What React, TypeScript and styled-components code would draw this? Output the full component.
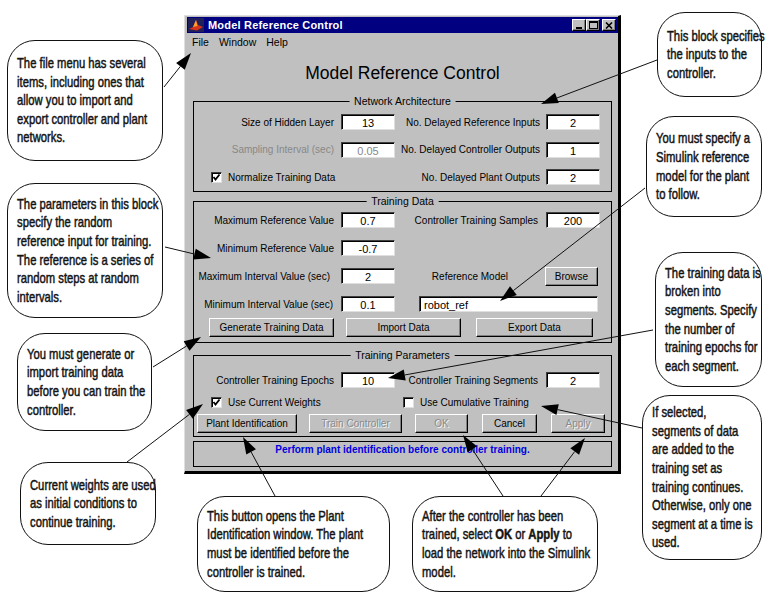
import React from "react";
import styled, { createGlobalStyle } from "styled-components";

const GlobalStyle = createGlobalStyle`
  html, body {
    margin: 0;
    padding: 0;
    background: #fff;
  }
  body {
    width: 784px;
    height: 597px;
    overflow: hidden;
  }
`;

const ui = `"Liberation Sans", Arial, sans-serif`;

const Page = styled.div`
  position: relative;
  width: 784px;
  height: 597px;
  display: grid;
  grid-template-columns: 184px 437px 163px;
  align-items: start;
  background: #fff;
`;

const SideColumn = styled.div`
  display: flex;
  flex-direction: column;
  align-items: flex-start;
`;

const Callout = styled.div<{ $w: number; $h: number; $top?: number; $left?: number }>`
  box-sizing: border-box;
  width: ${(p) => p.$w}px;
  height: ${(p) => p.$h}px;
  margin-top: ${(p) => p.$top ?? 0}px;
  margin-left: ${(p) => p.$left ?? 0}px;
  padding: 0 4px 0 9px;
  border: 1.3px solid #111;
  border-radius: 28px;
  background: #fff;
  display: flex;
  flex-direction: column;
  justify-content: center;
`;

// the callouts use a condensed face; squeeze Liberation Sans to get its widths
const NoteText = styled.div`
  transform: scaleX(0.75);
  transform-origin: 0 50%;
  font-family: "Liberation Sans", Arial, sans-serif;
  font-size: 15px;
  line-height: 18.6px;
  color: #141414;
  -webkit-text-stroke: 0.5px #141414;
  white-space: nowrap;

  b {
    font-weight: 700;
  }
`;

const CenterColumn = styled.div`
  display: flex;
  flex-direction: column;
`;

const BottomNotes = styled.div`
  display: flex;
  gap: 22px;
  margin-top: 22px;
  padding-left: 13px;
`;

/* ---- dialog ---- */

const Window = styled.div`
  margin-top: 15px;
  width: 437px;
  box-sizing: border-box;
  background: #c0c0c0;
  border-style: solid;
  border-width: 1px 3px 3px 1px;
  border-color: #dfdfdf #000 #000 #dfdfdf;
  padding: 1px 0 4px 2px;
  font-family: ${ui};
  color: #000;
`;

const TitleBar = styled.div`
  height: 16px;
  background: #000080;
  display: flex;
  align-items: center;
  padding: 0 2px 0 1px;
  gap: 4px;
`;

const TitleText = styled.span`
  color: #fff;
  font-weight: 700;
  font-size: 11px;
  letter-spacing: 0.2px;
`;

const TitleButtons = styled.div`
  margin-left: auto;
  display: flex;
`;

const WinButton = styled.div<{ $gap?: number }>`
  box-sizing: border-box;
  width: 14px;
  height: 12px;
  margin-left: ${(p) => p.$gap ?? 0}px;
  background: #c0c0c0;
  border: 1px solid;
  border-color: #fff #000 #000 #fff;
  box-shadow: inset -1px -1px #808080;
  display: flex;
  align-items: center;
  justify-content: center;
`;

const MenuBar = styled.div`
  height: 18px;
  display: flex;
  align-items: center;
  font-size: 10.5px;
`;

const MenuItem = styled.span`
  padding: 0 5px;
`;

const Heading = styled.div`
  height: 32px;
  box-sizing: border-box;
  padding-top: 12px;
  text-align: center;
  font-size: 17.5px;
  line-height: 20px;
`;

const Body = styled.div`
  display: flex;
  flex-direction: column;
  padding: 0 6px;
`;

const Group = styled.div<{ $top: number; $pt: number; $pb: number }>`
  position: relative;
  margin-top: ${(p) => p.$top}px;
  padding: ${(p) => p.$pt}px 0 ${(p) => p.$pb}px;
  border: 1px solid #000;
`;

const GroupTitle = styled.span`
  position: absolute;
  top: -7px;
  left: 50%;
  transform: translateX(-50%);
  padding: 0 5px;
  background: #c0c0c0;
  font-size: 10.5px;
  line-height: 12px;
  white-space: nowrap;
`;

const FieldGrid = styled.div<{ $gap: number }>`
  display: grid;
  grid-template-columns: 147px 54px 151px 54px;
  grid-auto-rows: 16px;
  row-gap: ${(p) => p.$gap}px;
  align-items: center;
`;

const Label = styled.span<{ $pr?: number; $off?: boolean }>`
  text-align: right;
  padding-right: ${(p) => p.$pr ?? 7}px;
  font-size: 10px;
  white-space: nowrap;
  color: ${(p) => (p.$off ? "#888" : "#000")};
`;

const Field = styled.div<{ $off?: boolean; $left?: boolean; $span?: boolean }>`
  box-sizing: border-box;
  height: 16px;
  background: #fff;
  border: 1px solid;
  border-color: #404040 #dfdfdf #dfdfdf #404040;
  box-shadow: inset 1px 1px #000;
  font-size: 11px;
  line-height: 15px;
  padding: 1px 4px 0;
  text-align: ${(p) => (p.$left ? "left" : "center")};
  color: ${(p) => (p.$off ? "#888" : "#000")};
  ${(p) => (p.$span ? "grid-column: 3 / 5; margin: 0 2px 0 24px;" : "")}
`;

const CheckCell = styled.label<{ $pl: number; $cols: string }>`
  grid-column: ${(p) => p.$cols};
  display: flex;
  align-items: center;
  gap: 6px;
  padding-left: ${(p) => p.$pl}px;
  font-size: 10px;
  white-space: nowrap;
`;

const Box = styled.span`
  box-sizing: border-box;
  width: 11px;
  height: 11px;
  background: #fff;
  border: 1px solid;
  border-color: #404040 #dfdfdf #dfdfdf #404040;
  box-shadow: inset 1px 1px #000;
  display: flex;
  align-items: center;
  justify-content: center;
`;

const ButtonRow = styled.div<{ $top: number; $pl: number }>`
  display: flex;
  margin-top: ${(p) => p.$top}px;
  padding-left: ${(p) => p.$pl}px;
`;

const Button = styled.div<{ $w: number; $ml?: number; $off?: boolean }>`
  box-sizing: border-box;
  width: ${(p) => p.$w}px;
  height: 19px;
  margin-left: ${(p) => p.$ml ?? 0}px;
  background: #c0c0c0;
  border: 1px solid;
  border-color: #fff #000 #000 #fff;
  box-shadow: inset -1px -1px #808080;
  display: flex;
  align-items: center;
  justify-content: center;
  font-size: 10px;
  white-space: nowrap;
  color: ${(p) => (p.$off ? "#8a8a8a" : "#000")};
  text-shadow: ${(p) => (p.$off ? "1px 1px #f4f4f4" : "none")};
`;

const CheckRow = styled(FieldGrid)`
  margin-top: 8px;
  grid-auto-rows: 12px;
`;

const StatusBar = styled.div`
  box-sizing: border-box;
  margin-top: 4px;
  height: 26px;
  border: 1px solid #000;
  padding-top: 2px;
  text-align: center;
  font-size: 10px;
  font-weight: 700;
  color: #0000e0;
`;

const Arrows = styled.svg`
  position: absolute;
  left: 0;
  top: 0;
  pointer-events: none;
`;

/* ---- drawings ---- */

const AppIcon = () => (
  <svg width="16" height="14" viewBox="0 0 16 14">
    <rect width="16" height="14" fill="#20205a" />
    <path d="M1 11 L5 9 L8 2 L10 7 L15 9 L9 12.5 Z" fill="#d8341a" />
    <path d="M5 9 L8 2 L9.5 8 Z" fill="#ffa030" />
  </svg>
);

const Tick = () => (
  <svg width="9" height="9" viewBox="0 0 9 9">
    <path d="M1.5 4 L3.5 6.5 L7.5 1.5" stroke="#000" strokeWidth="1.8" fill="none" />
  </svg>
);

const Check = ({ on }: { on?: boolean }) => <Box>{on ? <Tick /> : null}</Box>;

type ArrowSpec = [number, number, number, number];

const arrowList: ArrowSpec[] = [
  [164, 87, 191, 53],
  [165, 247, 211, 258],
  [153, 367, 201, 337],
  [127, 462, 203, 404],
  [657, 60, 541, 104],
  [645, 188, 500, 301],
  [653, 330, 388, 378],
  [642, 428, 541, 406],
  [275, 496, 243, 437],
  [503, 496, 463, 435],
  [541, 496, 585, 438],
];

const Arrow = ({ a }: { a: ArrowSpec }) => {
  const [x1, y1, x2, y2] = a;
  const dx = x2 - x1;
  const dy = y2 - y1;
  const len = Math.hypot(dx, dy);
  const ux = dx / len;
  const uy = dy / len;
  const bx = x2 - ux * 17;
  const by = y2 - uy * 17;
  const nx = -uy * 5.5;
  const ny = ux * 5.5;
  return (
    <g>
      <line x1={x1} y1={y1} x2={bx} y2={by} stroke="#111" strokeWidth="1" />
      <polygon points={`${x2},${y2} ${bx + nx},${by + ny} ${bx - nx},${by - ny}`} fill="#000" />
    </g>
  );
};

const Note = ({ rows }: { rows: React.ReactNode[] }) => (
  <NoteText>
    {rows.map((r, i) => (
      <div key={i}>{r}</div>
    ))}
  </NoteText>
);

export default function App() {
  return (
    <Page>
      <GlobalStyle />

      <SideColumn>
        <Callout $w={156} $h={121} $top={40} $left={7}>
          <Note
            rows={[
              "The file menu has several",
              "items, including ones that",
              "allow you to import and",
              "export controller and plant",
              "networks.",
            ]}
          />
        </Callout>
        <Callout $w={156} $h={135} $top={22} $left={7}>
          <Note
            rows={[
              "The parameters in this block",
              "specify the random",
              "reference input for training.",
              "The reference is a series of",
              "random steps at random",
              "intervals.",
            ]}
          />
        </Callout>
        <Callout $w={135} $h={98} $top={15} $left={17}>
          <Note
            rows={["You must generate or", "import training data", "before you can train the", "controller."]}
          />
        </Callout>
        <Callout $w={136} $h={83} $top={31} $left={20}>
          <Note rows={["Current weights are used", "as initial conditions to", "continue training."]} />
        </Callout>
      </SideColumn>

      <CenterColumn>
        <Window>
          <TitleBar>
            <AppIcon />
            <TitleText>Model Reference Control</TitleText>
            <TitleButtons>
              <WinButton>
                <svg width="8" height="8" viewBox="0 0 8 8">
                  <rect x="1" y="6" width="6" height="2" fill="#000" />
                </svg>
              </WinButton>
              <WinButton>
                <svg width="9" height="8" viewBox="0 0 9 8">
                  <rect x="0.5" y="0.5" width="8" height="7" fill="none" stroke="#000" />
                  <rect x="0" y="0" width="9" height="2" fill="#000" />
                </svg>
              </WinButton>
              <WinButton $gap={2}>
                <svg width="8" height="7" viewBox="0 0 8 7">
                  <path d="M1 0.5 L7 6.5 M7 0.5 L1 6.5" stroke="#000" strokeWidth="1.6" />
                </svg>
              </WinButton>
            </TitleButtons>
          </TitleBar>

          <MenuBar>
            <MenuItem>File</MenuItem>
            <MenuItem>Window</MenuItem>
            <MenuItem>Help</MenuItem>
          </MenuBar>

          <Heading>Model Reference Control</Heading>

          <Body>
            <Group $top={18} $pt={12} $pb={6}>
              <GroupTitle>Network Architecture</GroupTitle>
              <FieldGrid $gap={11.5}>
                <Label>Size of Hidden Layer</Label>
                <Field>13</Field>
                <Label $pr={6}>No. Delayed Reference Inputs</Label>
                <Field>2</Field>

                <Label $off>Sampling Interval (sec)</Label>
                <Field $off>0.05</Field>
                <Label $pr={6}>No. Delayed Controller Outputs</Label>
                <Field>1</Field>

                <CheckCell $pl={17} $cols="1 / 3">
                  <Check on />
                  Normalize Training Data
                </CheckCell>
                <Label $pr={6}>No. Delayed Plant Outputs</Label>
                <Field>2</Field>
              </FieldGrid>
            </Group>

            <Group $top={9} $pt={10} $pb={5}>
              <GroupTitle>Training Data</GroupTitle>
              <FieldGrid $gap={12}>
                <Label>Maximum Reference Value</Label>
                <Field>0.7</Field>
                <Label $pr={8}>Controller Training Samples</Label>
                <Field>200</Field>

                <Label>Minimum Reference Value</Label>
                <Field>-0.7</Field>
                <span />
                <span />

                <Label $pr={11}>Maximum Interval Value (sec)</Label>
                <Field>2</Field>
                <Label $pr={38}>Reference Model</Label>
                <Button $w={53} $ml={-1}>
                  Browse
                </Button>

                <Label $pr={8}>Minimum Interval Value (sec)</Label>
                <Field>0.1</Field>
                <Field $left $span>
                  robot_ref
                </Field>
              </FieldGrid>
              <ButtonRow $top={6} $pl={15}>
                <Button $w={125}>Generate Training Data</Button>
                <Button $w={115} $ml={12}>
                  Import Data
                </Button>
                <Button $w={117} $ml={15}>
                  Export Data
                </Button>
              </ButtonRow>
            </Group>

            <Group $top={12} $pt={16} $pb={3}>
              <GroupTitle>Training Parameters</GroupTitle>
              <FieldGrid $gap={0}>
                <Label>Controller Training Epochs</Label>
                <Field>10</Field>
                <Label $pr={8}>Controller Training Segments</Label>
                <Field>2</Field>
              </FieldGrid>
              <CheckRow $gap={0}>
                <CheckCell $pl={17} $cols="1 / 3">
                  <Check on />
                  Use Current Weights
                </CheckCell>
                <CheckCell $pl={8} $cols="3 / 5">
                  <Check />
                  Use Cumulative Training
                </CheckCell>
              </CheckRow>
              <ButtonRow $top={6} $pl={3}>
                <Button $w={100}>Plant Identification</Button>
                <Button $w={93} $ml={12} $off>
                  Train Controller
                </Button>
                <Button $w={53} $ml={13} $off>
                  OK
                </Button>
                <Button $w={55} $ml={14}>
                  Cancel
                </Button>
                <Button $w={54} $ml={14} $off>
                  Apply
                </Button>
              </ButtonRow>
            </Group>

            <StatusBar>Perform plant identification before controller training.</StatusBar>
          </Body>
        </Window>

        <BottomNotes>
          <Callout $w={193} $h={96}>
            <Note
              rows={[
                "This button opens the Plant",
                "Identification window. The plant",
                "must be identified before the",
                "controller is trained.",
              ]}
            />
          </Callout>
          <Callout $w={186} $h={96}>
            <Note
              rows={[
                "After the controller has been",
                <>
                  trained, select <b>OK</b> or <b>Apply</b> to
                </>,
                "load the network into the Simulink",
                "model.",
              ]}
            />
          </Callout>
        </BottomNotes>
      </CenterColumn>

      <SideColumn>
        <Callout $w={105} $h={85} $top={12} $left={36}>
          <Note rows={["This block specifies", "the inputs to the", "controller."]} />
        </Callout>
        <Callout $w={116} $h={101} $top={19} $left={25}>
          <Note rows={["You must specify a", "Simulink reference", "model for the plant", "to follow."]} />
        </Callout>
        <Callout $w={107} $h={135} $top={35} $left={34}>
          <Note
            rows={[
              "The training data is",
              "broken into",
              "segments. Specify",
              "the number of",
              "training epochs for",
              "each segment.",
            ]}
          />
        </Callout>
        <Callout $w={120} $h={165} $top={8} $left={21}>
          <Note
            rows={[
              "If selected,",
              "segments of data",
              "are added to the",
              "training set as",
              "training continues.",
              "Otherwise, only one",
              "segment at a time is",
              "used.",
            ]}
          />
        </Callout>
      </SideColumn>

      <Arrows width="784" height="597" viewBox="0 0 784 597">
        {arrowList.map((a, i) => (
          <Arrow key={i} a={a} />
        ))}
      </Arrows>
    </Page>
  );
}
